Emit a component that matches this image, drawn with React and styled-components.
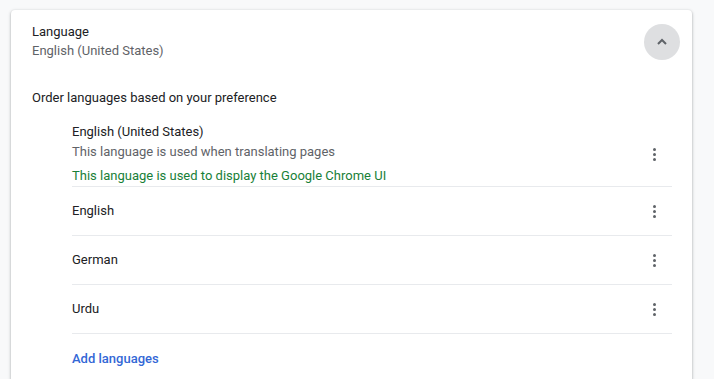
import React from "react"
import styled, { createGlobalStyle } from "styled-components"

const GlobalStyle = createGlobalStyle`
  body {
    margin: 0;
    background: #f8f9fa;
    font-family: Roboto, "Liberation Sans", sans-serif;
    font-size: 13px;
    color: #202124;
  }
`

const languages = [
  {
    name: "English (United States)",
    notes: ["This language is used when translating pages"],
    ui: "This language is used to display the Google Chrome UI",
  },
  { name: "English" },
  { name: "German" },
  { name: "Urdu" },
]

function App() {
  return (
    <Page>
      <GlobalStyle />
      <Card>
        <Header>
          <HeaderText>
            <Title>Language</Title>
            <Secondary>English (United States)</Secondary>
          </HeaderText>
          <RoundButton aria-label="collapse">
            <svg width="12" height="12" viewBox="0 0 12 12">
              <path d="M2 8 L6 4 L10 8" fill="none" stroke="#5f6368" strokeWidth="2" />
            </svg>
          </RoundButton>
        </Header>

        <Label>Order languages based on your preference</Label>

        <List>
          {languages.map((lang) => (
            <Row key={lang.name}>
              <RowText>
                <Title>{lang.name}</Title>
                {lang.notes && lang.notes.map((n) => <Secondary key={n}>{n}</Secondary>)}
                {lang.ui && <Green>{lang.ui}</Green>}
              </RowText>
              <MoreButton aria-label="more">
                <Dot />
                <Dot />
                <Dot />
              </MoreButton>
            </Row>
          ))}
          <Row $last>
            <AddLink>Add languages</AddLink>
          </Row>
        </List>
      </Card>
    </Page>
  )
}

const Page = styled.div`
  padding: 10px 22px 0 11px;
  height: 379px;
  box-sizing: border-box;
  overflow: hidden;
`

const Card = styled.div`
  background: #fff;
  border-radius: 4px;
  box-shadow: 0 1px 2px rgba(60, 64, 67, 0.3), 0 1px 3px 1px rgba(60, 64, 67, 0.15);
`

const Header = styled.div`
  display: flex;
  align-items: center;
  justify-content: space-between;
  min-height: 64px;
  padding: 0 12px 0 21px;
`

const HeaderText = styled.div`
  display: flex;
  flex-direction: column;
`

const Title = styled.div`
  line-height: 18px;
  color: #202124;
`

const Secondary = styled.div`
  line-height: 20px;
  color: #5f6368;
`

const Green = styled.div`
  line-height: 20px;
  margin-top: 4px;
  color: #188038;
`

const RoundButton = styled.button`
  width: 36px;
  height: 36px;
  border: none;
  border-radius: 50%;
  background: #dedfe1;
  display: flex;
  align-items: center;
  justify-content: center;
  padding: 0;
`

const Label = styled.div`
  padding: 14px 21px 0;
  line-height: 20px;
  margin-bottom: 14px;
`

const List = styled.div`
  margin: 0 20px 0 61px;
`

const Row = styled.div`
  display: flex;
  align-items: center;
  justify-content: space-between;
  min-height: 48px;
  border-bottom: ${(p) => (p.$last ? "none" : "1px solid #e8eaed")};
`

const RowText = styled.div`
  display: flex;
  flex-direction: column;
  ${Title} {
    line-height: 20px;
  }
`

const MoreButton = styled.div`
  width: 36px;
  height: 36px;
  display: flex;
  flex-direction: column;
  align-items: center;
  justify-content: center;
  gap: 2px;
`

const Dot = styled.span`
  width: 3px;
  height: 3px;
  border-radius: 50%;
  background: #5f6368;
`

const AddLink = styled.span`
  color: #3367d6;
  font-weight: 500;
`

export default App
